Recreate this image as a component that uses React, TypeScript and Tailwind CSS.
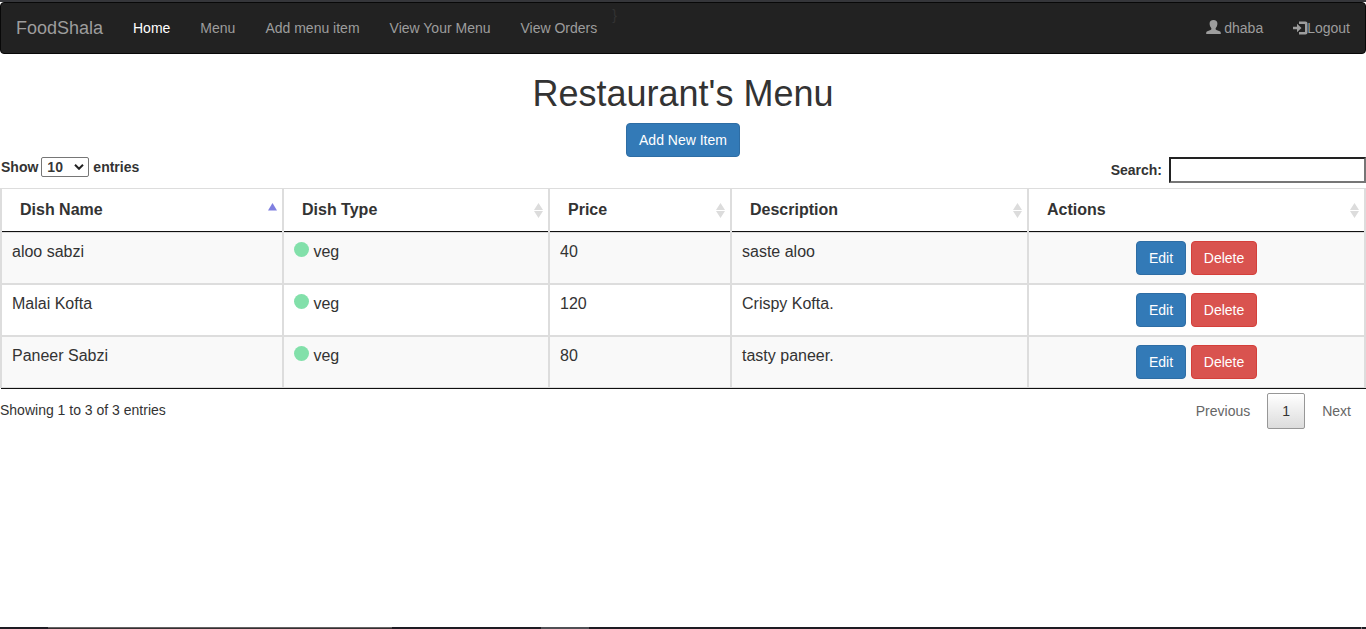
import React from "react";

type Dish = { name: string; type: string; price: number; description: string };

const dishes: Dish[] = [
  { name: "aloo sabzi", type: "veg", price: 40, description: "saste aloo" },
  { name: "Malai Kofta", type: "veg", price: 120, description: "Crispy Kofta." },
  { name: "Paneer Sabzi", type: "veg", price: 80, description: "tasty paneer." },
];

const columns = ["Dish Name", "Dish Type", "Price", "Description", "Actions"];
const links = ["Menu", "Add menu item", "View Your Menu", "View Orders"];

function UserIcon() {
  return (
    <svg width="15" height="14" viewBox="0 0 15 14" fill="currentColor" className="block shrink-0">
      <path d="M7.500 0C5 0 3.600 1.400 3.600 3.600c0 1 .2 2 .6 2.900.4.800 1.100 1.500 1.200 2.100.1.700-.3 1.200-.9 1.500L1.400 11.300C.5 11.700.2 12.200.2 13v1h14.600v-1c0-.8-.3-1.300-1.200-1.700l-3.100-1.200c-.6-.3-1-.8-.9-1.500.1-.6.8-1.300 1.200-2.100.4-.9.600-1.900.6-2.900C11.400 1.400 10 0 7.500 0z" />
    </svg>
  );
}

function LogInIcon() {
  return (
    <svg width="15" height="14" viewBox="0 0 15 14" fill="currentColor" className="-mr-px block shrink-0">
      <path d="M0 5.700h4V2.800L8.500 7 4 11.200V8.300H0z" />
      <path d="M6 .5h6.500A2 2 0 0 1 14.500 2.500v9a2 2 0 0 1-2 2H6v-2.500h5.500a.5.5 0 0 0 .5-.5v-7a.5.5 0 0 0-.5-.5H6z" />
    </svg>
  );
}

function SortIcon({ active }: { active?: boolean }) {
  if (active) {
    return (
      <svg width="9" height="14" viewBox="0 0 9 14" className="mr-[5px] mt-[14px] shrink-0">
        <path d="M4.500 0L9 7.500H0z" fill="#7f7fe0" />
      </svg>
    );
  }
  return (
    <svg width="9" height="15" viewBox="0 0 9 15" fill="#dcdcdc" className="mr-[5px] mt-[14px] shrink-0">
      <path d="M4.500 0L9 7H0zM0 8h9L4.500 15z" />
    </svg>
  );
}

const grid = "grid grid-cols-[284px_266px_182px_297px_337px]";
const cell = "border-r-2 border-[#ddd] first:border-l-2";
const btn =
  "flex h-[34px] items-center justify-center rounded border text-sm leading-5 text-white";

export default function App() {
  return (
    <div className="flex h-[629px] w-[1366px] flex-col overflow-hidden bg-white font-['Liberation_Sans',Arial,sans-serif] text-sm leading-5 text-[#333]">
      <div className="h-[2px] shrink-0 bg-[#35363a]" />
      <nav className="flex h-[52px] shrink-0 items-center rounded border border-[#080808] bg-[#222] text-[#9d9d9d]">
        <a className="w-[117px] pl-[15px] text-lg leading-5">FoodShala</a>
        <a className="px-[15px] text-white">Home</a>
        {links.map((l) => (
          <a key={l} className="px-[15px]">
            {l}
          </a>
        ))}
        <span className="-mt-[27px] text-[#333]">{"}"}</span>
        <a className="ml-auto flex items-center gap-[3px] pl-[15px] pr-[15px]">
          <span className="-mt-[2px]">
            <UserIcon />
          </span>
          dhaba
        </a>
        <a className="flex items-center px-[15px]">
          <LogInIcon />
          <span>Logout</span>
        </a>
      </nav>

      <h1 className="mt-5 text-center text-4xl leading-[39px]">Restaurant's Menu</h1>
      <div className="mt-[10px] flex justify-center">
        <button className={`${btn} w-[114px] border-[#2e6da4] bg-[#337ab7]`}>Add New Item</button>
      </div>

      <div className="flex h-[31px] shrink-0 items-start justify-between font-bold">
        <label className="flex h-5 items-center pl-px">
          Show
          <span className="-ml-px mr-1 flex h-5 w-12 translate-x-0 items-center justify-between rounded-[2px] border border-[#767676] pl-[5px] pr-1 text-black/80 ml-[3px]">
            10
            <svg width="10" height="6" viewBox="0 0 10 6" fill="none" stroke="#222" strokeWidth="2">
              <path d="M1 .8l4 4 4-4" />
            </svg>
          </span>
          entries
        </label>
        <label className="flex h-[26px] items-center">
          Search:
          <input className="ml-[7px] h-[26px] w-[197px] border-2 border-b-[#767676] border-l-[#222] border-r-[#767676] border-t-[#222] bg-white px-1 outline-none" />
        </label>
      </div>

      <div className="shrink-0 border-t border-[#ddd] text-base">
        <div className={grid}>
          {columns.map((c, i) => (
            <div key={c} className={`${cell} h-11 font-bold leading-[22px]`}>
              <div className="flex h-[43px] justify-between border-b border-[#111]">
                <span className="pl-[18px] pt-[10px]">{c}</span>
                <SortIcon active={i === 0} />
              </div>
              <div className="h-px bg-[#ddd]" />
            </div>
          ))}
        </div>
        {dishes.map((d, i) => (
          <div
            key={d.name}
            className={`${grid} ${i % 2 === 0 ? "bg-[#f9f9f9]" : "bg-white"} ${
              i === 2 ? "h-[51px] border-b border-[#ddd]" : "h-[52px] border-b-2 border-[#ddd]"
            } leading-[22px]`}
          >
            <div className={`${cell} pl-[10px] pt-2`}>{d.name}</div>
            <div className={`${cell} flex items-start pl-[10px] pt-2`}>
              <span className="mr-[4.4px] mt-px h-[15px] w-[15px] rounded-full bg-[#82e0aa]" />
              {d.type}
            </div>
            <div className={`${cell} pl-[10px] pt-2`}>{d.price}</div>
            <div className={`${cell} pl-[10px] pt-2`}>{d.description}</div>
            <div className={`${cell} flex items-start justify-center gap-[5px] pt-2`}>
              <button className={`${btn} w-[50px] border-[#2e6da4] bg-[#337ab7]`}>Edit</button>
              <button className={`${btn} w-[66px] border-[#d43f3a] bg-[#d9534f]`}>Delete</button>
            </div>
          </div>
        ))}
        <div className="ml-px h-px bg-[#111]" />
      </div>

      <div className="flex items-start justify-between">
        <span className="pt-[11px]">Showing 1 to 3 of 3 entries</span>
        <div className="flex items-center pt-1 text-[#666]">
          <span>Previous</span>
          <button className="ml-[17px] h-9 w-[38px] rounded-[2px] border border-[#979797] bg-linear-to-b from-white to-[#dcdcdc] text-[#333]">
            1
          </button>
          <span className="ml-[17px] mr-[15px]">Next</span>
        </div>
      </div>

      <div className="mt-auto flex h-[2px] shrink-0 bg-[#1e1c23]">
        <div className="w-12" />
        <div className="w-[344px] border-t border-[#656263] bg-[#353032]" />
        <div className="w-[149px]" />
        <div className="w-12 bg-[#505055]" />
        <div className="ml-auto mr-1 w-px bg-[#777]" />
      </div>
    </div>
  );
}
